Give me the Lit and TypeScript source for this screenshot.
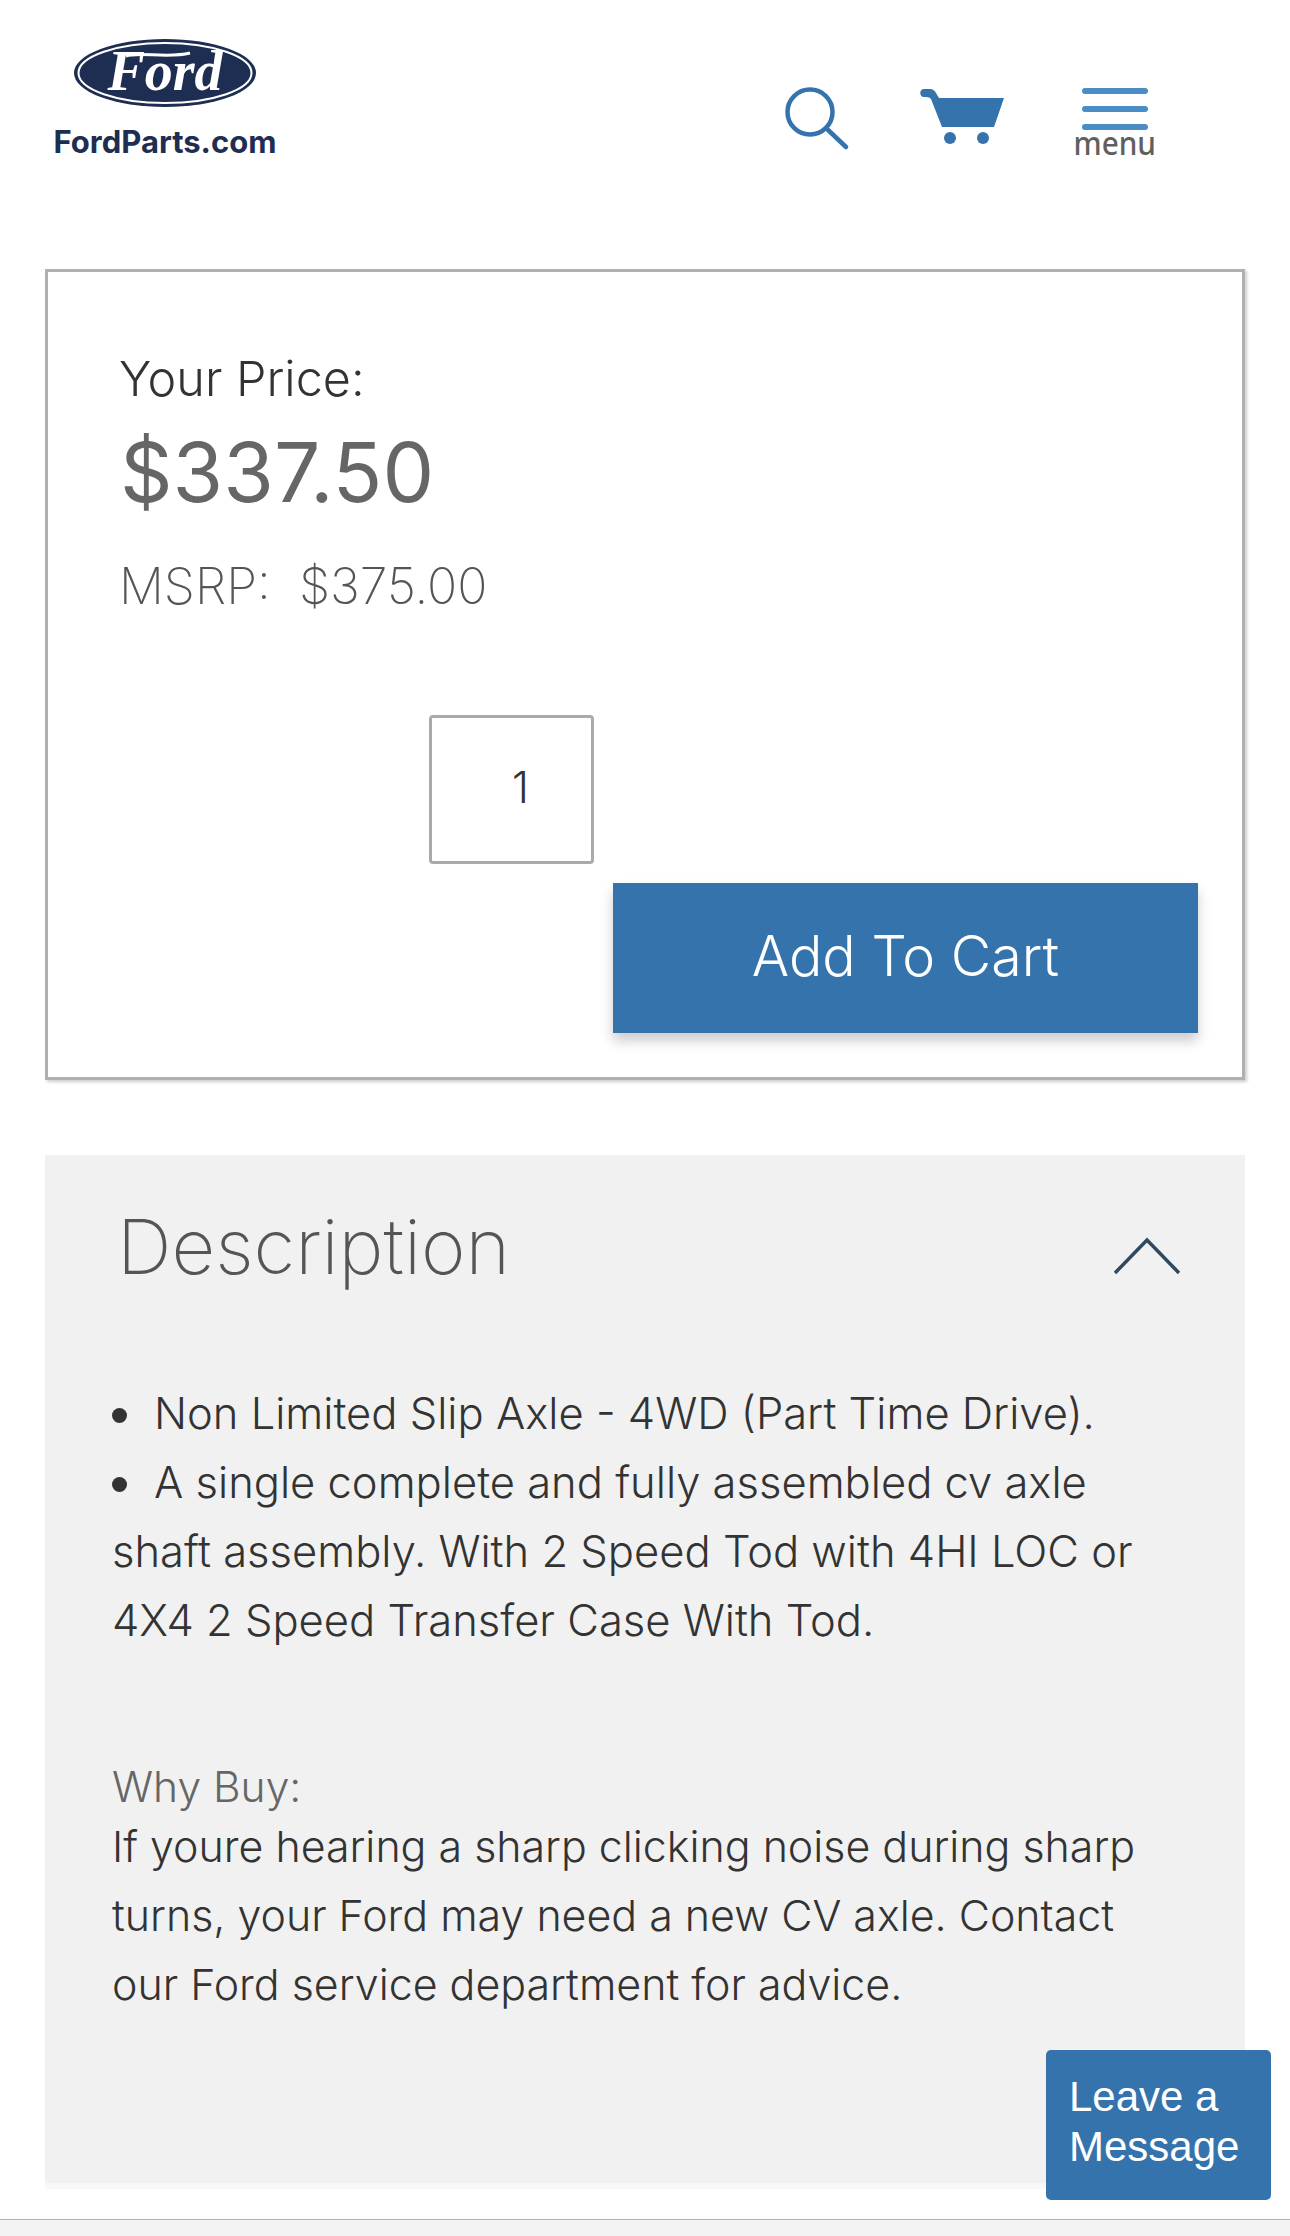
import { LitElement, css, html } from "lit";
import { customElement } from "lit/decorators.js";

@customElement("app-root")
export class AppRoot extends LitElement {
  static styles = css`
    :host {
      display: block;
      position: relative;
      height: 2236px;
      overflow: hidden;
      background: #fff;
      font-family: Inter, "Liberation Sans", sans-serif;
      font-weight: 300;
      color: #333;
    }

    .header {
      display: flex;
      height: 269px;
      box-sizing: border-box;
      padding: 39px 0 0 53px;
    }

    .brand {
      display: flex;
      flex-direction: column;
      align-items: center;
      width: 224px;
    }

    .brand svg {
      display: block;
    }

    .brand-name {
      margin-top: 20px;
      font-size: 31px;
      line-height: 30px;
      font-weight: 700;
      color: #1e2d52;
      white-space: nowrap;
    }

    .icons {
      display: flex;
      align-items: flex-start;
    }

    .search {
      margin: 47px 0 0 507px;
    }

    .cart {
      margin: 50px 0 0 70px;
    }

    .menu {
      display: flex;
      flex-direction: column;
      align-items: center;
      margin: 49px 0 0 71px;
      width: 76px;
    }

    .bar {
      width: 66px;
      height: 6px;
      border-radius: 3px;
      background: #4a8cc4;
      margin-bottom: 12px;
    }

    .bar:last-of-type {
      margin-bottom: 0;
    }

    .menu-label {
      margin-top: -15px;
      font-family: "Noto Sans", sans-serif;
      font-size: 33px;
      line-height: 32px;
      font-weight: 500;
      color: #5f5f5f;
      transform: scaleX(0.9);
    }

    .price-card {
      display: flex;
      flex-direction: column;
      box-sizing: border-box;
      width: 1200px;
      height: 811px;
      margin-left: 45px;
      padding: 77px 44px 0 71px;
      border: 3px solid #b0b0b0;
      box-shadow: 2px 2px 3px rgba(0, 0, 0, 0.2);
    }

    .your-price {
      font-size: 48.5px;
      line-height: 60px;
      color: #333;
    }

    .price {
      margin-top: 16px;
      padding-left: 1px;
      font-size: 82px;
      line-height: 96px;
      font-weight: 400;
      color: #666;
    }

    .msrp {
      margin-top: 35px;
      font-size: 50px;
      line-height: 60px;
      font-weight: 200;
      color: #555;
      white-space: pre;
    }

    .qty {
      display: flex;
      align-items: center;
      justify-content: center;
      box-sizing: border-box;
      width: 165px;
      height: 149px;
      margin: 99px 0 0 310px;
      padding: 0 0 5px 18px;
      border: 3px solid #aaa;
      border-radius: 4px;
      font-size: 43px;
      color: #333;
    }

    .add {
      display: flex;
      align-items: center;
      justify-content: center;
      align-self: flex-end;
      box-sizing: border-box;
      width: 585px;
      height: 150px;
      margin-top: 19px;
      padding-bottom: 5px;
      background: #3573ad;
      box-shadow: 0 8px 12px rgba(0, 0, 0, 0.2);
      color: #fff;
      font-size: 55.5px;
    }

    .description {
      box-sizing: border-box;
      width: 1200px;
      height: 1028px;
      margin: 75px 0 0 45px;
      padding: 48px 0 0 67px;
      background: #f1f1f1;
      box-shadow: 0 6px 0 #f8f8f8;
    }

    .desc-head {
      display: flex;
      align-items: center;
      justify-content: space-between;
      height: 86px;
      padding: 0 65px 0 5px;
    }

    h2 {
      margin: 0;
      font-size: 76px;
      line-height: 86px;
      font-weight: 200;
      color: #555;
    }

    .chevron {
      margin-top: 20px;
    }

    .copy {
      margin: 0;
      font-size: 43.3px;
      line-height: 69px;
      white-space: nowrap;
    }

    .bullets {
      margin-top: 90px;
      font-size: 43.5px;
    }

    .dot {
      display: inline-block;
      width: 15px;
      height: 15px;
      margin-right: 27px;
      border-radius: 50%;
      background: #333;
      vertical-align: 6px;
    }

    .why {
      margin-top: 106px;
      font-size: 42.5px;
      line-height: 52px;
      color: #666;
    }

    .reason {
      font-size: 42.9px;
      margin-top: -1px;
    }

    .chat {
      position: absolute;
      left: 1046px;
      top: 2050px;
      box-sizing: border-box;
      width: 225px;
      height: 150px;
      padding: 22px 0 0 23px;
      border-radius: 5px;
      background: #3573ad;
      color: #fff;
      font-family: "Liberation Sans", Arial, sans-serif;
      font-size: 42px;
      line-height: 50px;
      font-weight: 400;
    }

    .toolbar {
      position: absolute;
      left: 0;
      right: 0;
      top: 2219px;
      height: 17px;
      border-top: 1px solid #b0b0b0;
      background: #f3f3f3;
    }
  `;

  render() {
    return html`
      <header class="header">
        <div class="brand">
          <svg width="182" height="68" viewBox="0 0 182 68">
            <ellipse cx="91" cy="34" rx="91" ry="34" fill="#1e2d52"></ellipse>
            <ellipse cx="91" cy="34" rx="86.5" ry="30" fill="none" stroke="#fff" stroke-width="2"></ellipse>
            <path d="M52 17 C66 12 92 20 116 14" fill="none" stroke="#fff" stroke-width="3"></path>
            <text
              x="91"
              y="51"
              text-anchor="middle"
              fill="#fff"
              font-family="Liberation Serif"
              font-style="italic"
              font-weight="700"
              font-size="56"
            >Ford</text>
          </svg>
          <div class="brand-name">FordParts.com</div>
        </div>
        <div class="icons">
          <svg class="search" width="66" height="66" viewBox="0 0 66 66" fill="none" stroke="#3573ad" stroke-width="4.5" stroke-linecap="round">
            <circle cx="26" cy="26" r="22.5"></circle>
            <path d="M42.5 42.5 L62 61"></path>
          </svg>
          <svg class="cart" width="86" height="56" viewBox="0 0 86 56" fill="#3573ad">
            <path d="M4 0 H10 C13 0 15 2 16 4 L19 9 H84 L74 38 H22 L11 10 C9 8 7 8 4 8 C-1 8 -1 0 4 0 Z"></path>
            <circle cx="30" cy="49" r="6"></circle>
            <circle cx="63" cy="49" r="6"></circle>
          </svg>
          <div class="menu">
            <div class="bar"></div>
            <div class="bar"></div>
            <div class="bar"></div>
            <div class="menu-label">menu</div>
          </div>
        </div>
      </header>

      <section class="price-card">
        <div class="your-price">Your Price:</div>
        <div class="price">$337.50</div>
        <div class="msrp">MSRP:  $375.00</div>
        <div class="qty">1</div>
        <div class="add">Add To Cart</div>
      </section>

      <section class="description">
        <div class="desc-head">
          <h2>Description</h2>
          <svg class="chevron" width="66" height="38" viewBox="0 0 66 38" fill="none" stroke="#2f4a60" stroke-width="3.5">
            <path d="M1 36 L33 3 L65 36"></path>
          </svg>
        </div>
        <p class="copy bullets">
          <span class="dot"></span>Non Limited Slip Axle - 4WD (Part Time Drive).<br />
          <span class="dot"></span>A single complete and fully assembled cv axle<br />
          shaft assembly. With 2 Speed Tod with 4HI LOC or<br />
          4X4 2 Speed Transfer Case With Tod.
        </p>
        <div class="why">Why Buy:</div>
        <p class="copy reason">
          If youre hearing a sharp clicking noise during sharp<br />
          turns, your Ford may need a new CV axle. Contact<br />
          our Ford service department for advice.
        </p>
      </section>

      <div class="chat">Leave a<br />Message</div>
      <div class="toolbar"></div>
    `;
  }
}
